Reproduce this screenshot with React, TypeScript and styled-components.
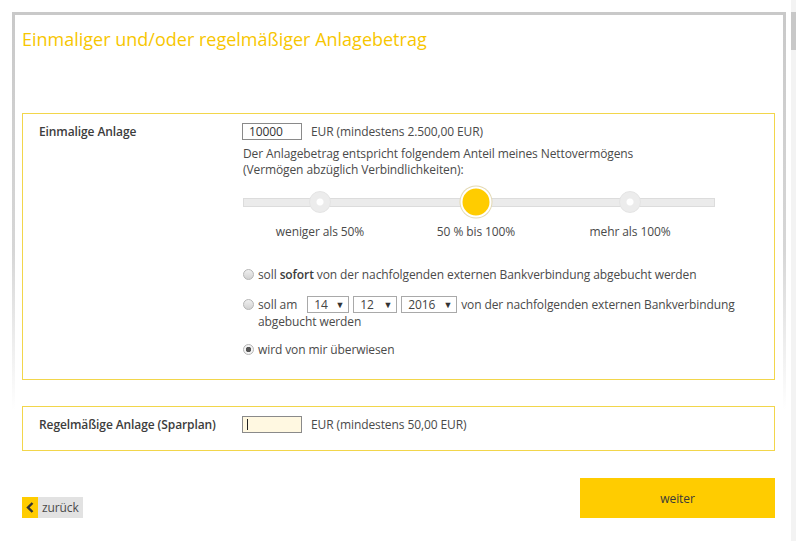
import React from 'react';
import styled, { createGlobalStyle } from 'styled-components';

const GlobalStyle = createGlobalStyle`
  html, body {
    margin: 0;
    padding: 0;
    background: #ffffff;
  }
  body {
    font-family: "Open Sans", "Noto Sans", Arial, sans-serif;
    font-size: 12px;
    letter-spacing: -0.1px;
    color: #4a4a4a;
  }
`;

const YELLOW = '#ffcc00';
const BOX_BORDER = '#f2d64b';

const Viewport = styled.div`
  display: flex;
  width: 796px;
  height: 541px;
  overflow: hidden;
`;

const Main = styled.div`
  flex: 1;
  padding: 12px 5px 0 12px;
`;

const Frame = styled.div`
  height: 529px;
  box-sizing: border-box;
  border-style: solid;
  border-width: 3px 3px 0 3px;
  border-image: linear-gradient(to bottom, #c9c9c9 0%, #d6d6d6 45%, rgba(230, 230, 230, 0) 75%) 1;
  padding: 0 8px 0 7px;
`;

const Title = styled.h1`
  margin: 12px 0 0 0;
  font-size: 18px;
  line-height: 24px;
  font-weight: 400;
  letter-spacing: 0;
  color: #f7c600;
`;

const Box = styled.section<{ $top: number; $pad: number }>`
  margin-top: ${p => p.$top}px;
  border: 1px solid ${BOX_BORDER};
  padding: 9px 16px ${p => p.$pad}px 16px;
  display: grid;
  grid-template-columns: 203px 1fr;
`;

const Label = styled.div`
  font-weight: 600;
  color: #3c3c3c;
  line-height: 17px;
`;

const Content = styled.div`
  display: flex;
  flex-direction: column;
`;

const AmountRow = styled.div`
  display: flex;
  align-items: center;
  gap: 9px;
  line-height: 17px;
`;

const AmountInput = styled.div<{ $empty?: boolean }>`
  width: 60px;
  height: 17px;
  box-sizing: border-box;
  border: 1px solid #8a8a8a;
  background: ${p => (p.$empty ? '#fff8e1' : '#ffffff')};
  padding: 0 6px;
  line-height: 15px;
  color: #333;
  display: flex;
  align-items: center;
`;

const Caret = styled.span`
  width: 1px;
  height: 11px;
  background: #222;
  margin-left: -2px;
`;

const Paragraph = styled.p`
  margin: 6px 0 0 1px;
  line-height: 16px;
`;

const SliderArea = styled.div`
  position: relative;
  width: 472px;
  margin: 6px 0 0 1px;
  height: 36px;
  display: flex;
  align-items: center;
`;

const Track = styled.div`
  width: 100%;
  height: 9px;
  box-sizing: border-box;
  background: #ebebeb;
  border: 1px solid #dcdcdc;
`;

const Knob = styled.div<{ $left: number; $active?: boolean }>`
  position: absolute;
  top: 50%;
  left: ${p => p.$left}px;
  transform: translate(-50%, -50%);
  border-radius: 50%;
  box-sizing: border-box;
  ${p =>
    p.$active
      ? `
    width: 31px;
    height: 31px;
    background: ${YELLOW};
    border: 2px solid #ffffff;
    box-shadow: 0 0 0 1px #e3d9b3;
  `
      : `
    width: 22px;
    height: 22px;
    background: radial-gradient(circle, #ffffff 0 3px, #ececec 4px);
    border: 1px solid #e4e4e4;
  `}
`;

const SliderLabels = styled.div`
  position: relative;
  width: 472px;
  height: 18px;
  margin: 3px 0 0 1px;
`;

const SliderLabel = styled.span<{ $center: number }>`
  position: absolute;
  left: ${p => p.$center}px;
  transform: translateX(-50%);
  white-space: nowrap;
  line-height: 18px;
`;

const Options = styled.div`
  display: flex;
  flex-direction: column;
  gap: 11px;
  margin: 25px 0 0 1px;
`;

const Option = styled.div<{ $extra?: number }>`
  display: flex;
  align-items: flex-start;
  gap: 4px;
  line-height: 17px;
  margin-top: ${p => p.$extra ?? 0}px;
`;

const Radio = styled.span<{ $checked?: boolean }>`
  flex: none;
  width: 11px;
  height: 11px;
  margin-top: 3px;
  border-radius: 50%;
  box-sizing: border-box;
  border: 1px solid #b5b5b5;
  background: ${p =>
    p.$checked
      ? 'radial-gradient(circle, #555 0 2.5px, #f4f4f4 3px)'
      : 'linear-gradient(#f0f0f0, #d2d2d2)'};
`;

const OptionText = styled.span`
  b {
    font-weight: 600;
    color: #3c3c3c;
  }
`;

const OptionBody = styled.div`
  display: flex;
  flex-direction: column;
`;

const DateLine = styled.div`
  display: flex;
  align-items: center;
  gap: 4px;
`;

const Select = styled.span<{ $w: number; $first?: boolean }>`
  display: flex;
  justify-content: space-between;
  align-items: center;
  width: ${p => p.$w}px;
  height: 17px;
  box-sizing: border-box;
  border: 1px solid #a9a9a9;
  padding: 0 4px 0 6px;
  margin-left: ${p => (p.$first ? 6 : 0)}px;
  line-height: 15px;
  color: #444;
`;

const Arrow = styled.span`
  font-size: 9px;
  color: #333;
`;

const Footer = styled.div`
  display: flex;
  justify-content: space-between;
  align-items: flex-end;
  margin-top: 27px;
`;

const BackButton = styled.div`
  display: flex;
  height: 21px;
  background: #e2e2e2;
  margin-bottom: 1px;
`;

const BackIcon = styled.span`
  width: 16px;
  background: ${YELLOW};
  display: flex;
  align-items: center;
  justify-content: center;
`;

const BackText = styled.span`
  padding: 0 4px;
  line-height: 21px;
  color: #4a4a4a;
`;

const NextButton = styled.div`
  width: 195px;
  height: 40px;
  background: ${YELLOW};
  color: #3a3a3a;
  display: flex;
  align-items: center;
  justify-content: center;
  margin-bottom: 1px;
`;

const Scrollbar = styled.div`
  width: 5px;
  background: #f3f3f3;
  display: flex;
  flex-direction: column;
  padding-top: 12px;
`;

const Thumb = styled.div`
  height: 38px;
  background: #c8c8c8;
`;

export default function App() {
  return (
    <>
      <GlobalStyle />
      <Viewport>
        <Main>
          <Frame>
            <Title>Einmaliger und/oder regelmäßiger Anlagebetrag</Title>

            <Box $top={62} $pad={21}>
              <Label>Einmalige Anlage</Label>
              <Content>
                <AmountRow>
                  <AmountInput>10000</AmountInput>
                  <span>EUR (mindestens 2.500,00 EUR)</span>
                </AmountRow>
                <Paragraph>
                  Der Anlagebetrag entspricht folgendem Anteil meines Nettovermögens
                  <br />
                  (Vermögen abzüglich Verbindlichkeiten):
                </Paragraph>
                <SliderArea>
                  <Track />
                  <Knob $left={77} />
                  <Knob $left={233} $active />
                  <Knob $left={387} />
                </SliderArea>
                <SliderLabels>
                  <SliderLabel $center={77}>weniger als 50%</SliderLabel>
                  <SliderLabel $center={233}>50 % bis 100%</SliderLabel>
                  <SliderLabel $center={387}>mehr als 100%</SliderLabel>
                </SliderLabels>
                <Options>
                  <Option>
                    <Radio />
                    <OptionText>
                      soll <b>sofort</b> von der nachfolgenden externen Bankverbindung abgebucht werden
                    </OptionText>
                  </Option>
                  <Option $extra={2}>
                    <Radio />
                    <OptionBody>
                      <DateLine>
                        <span>soll am</span>
                        <Select $w={42} $first>
                          14 <Arrow>▼</Arrow>
                        </Select>
                        <Select $w={44}>
                          12 <Arrow>▼</Arrow>
                        </Select>
                        <Select $w={56}>
                          2016 <Arrow>▼</Arrow>
                        </Select>
                        <span>von der nachfolgenden externen Bankverbindung</span>
                      </DateLine>
                      <span>abgebucht werden</span>
                    </OptionBody>
                  </Option>
                  <Option>
                    <Radio $checked />
                    <OptionText>wird von mir überwiesen</OptionText>
                  </Option>
                </Options>
              </Content>
            </Box>

            <Box $top={26} $pad={17}>
              <Label>Regelmäßige Anlage (Sparplan)</Label>
              <AmountRow>
                <AmountInput $empty>
                  <Caret />
                </AmountInput>
                <span>EUR (mindestens 50,00 EUR)</span>
              </AmountRow>
            </Box>

            <Footer>
              <BackButton>
                <BackIcon>
                  <svg width="8" height="11" viewBox="0 0 8 11">
                    <path d="M6.5 1 L2 5.5 L6.5 10" fill="none" stroke="#333" strokeWidth="2.4" />
                  </svg>
                </BackIcon>
                <BackText>zurück</BackText>
              </BackButton>
              <NextButton>weiter</NextButton>
            </Footer>
          </Frame>
        </Main>
        <Scrollbar>
          <Thumb />
        </Scrollbar>
      </Viewport>
    </>
  );
}
